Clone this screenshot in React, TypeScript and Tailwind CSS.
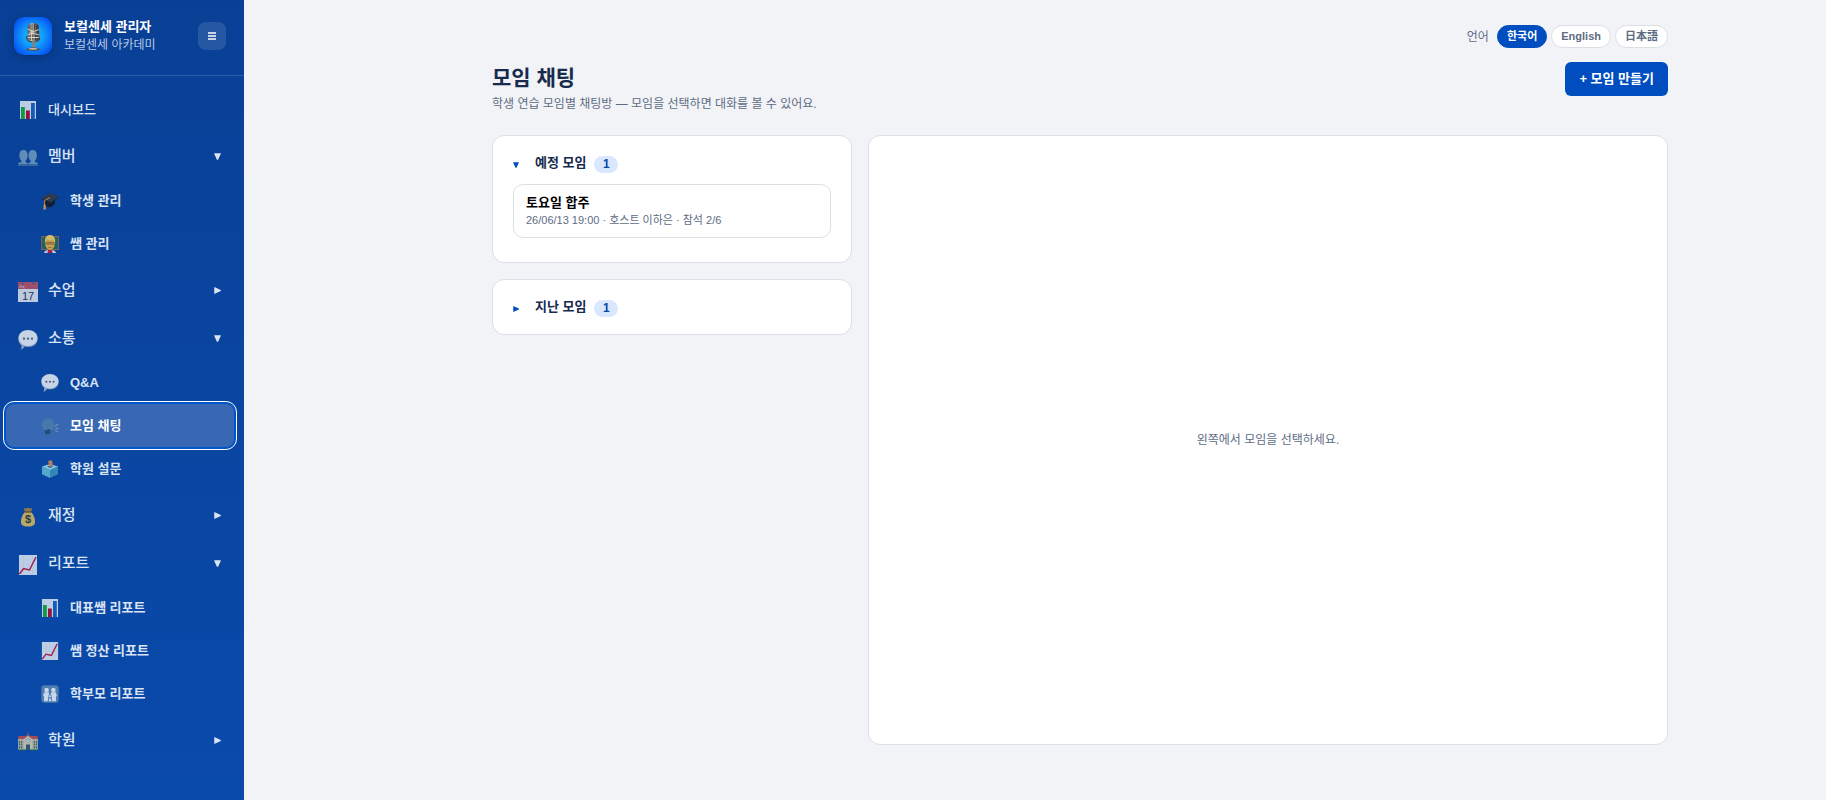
import { useState, type ReactNode } from "react";

function ChartBars() {
  return (
    <svg viewBox="0 0 18 18" className="size-full" aria-hidden="true">
      <rect x="1" y="0" width="16" height="18" fill="#dde5ef" />
      <rect x="2" y="6" width="3.800" height="12" fill="#16a832" />
      <rect x="7" y="9.500" width="3.800" height="8.500" fill="#b0092e" />
      <rect x="12" y="2" width="3.800" height="16" fill="#1262c0" />
    </svg>
  );
}

function ChartLine() {
  return (
    <svg viewBox="0 0 20 20" className="size-full" aria-hidden="true">
      <rect x="1" y="0" width="18" height="20" fill="#dde6f0" />
      <path d="M1 5h18M1 10h18M1 15h18M5.500 0v20M10 0v20M14.500 0v20" stroke="#cddae8" strokeWidth=".5" />
      <path d="M1.500 19 5.500 13.500 11.500 15 18 2" fill="none" stroke="#b8163c" strokeWidth="1.500" />
    </svg>
  );
}

function People() {
  return (
    <svg viewBox="0 0 20 20" className="size-full" aria-hidden="true">
      <g fill="#6f9bbd">
        <path d="M5.500 2c2.500 0 4.200 1.700 4.200 5.200 0 2.500-1 4.600-2.200 5.600v1.200l2 1.100v2.400H0v-1.600c.3-1.300 2.200-1.500 3.500-1.900v-1.200C2.200 11.800 1.300 9.700 1.300 7.200 1.300 3.700 3 2 5.500 2z" />
        <path d="M14.700 2c2.500 0 4.200 1.700 4.200 5.200 0 2.500-.9 4.600-2.200 5.600V14c1.300.4 3 .6 3.300 1.900v1.600h-9.500v-2.400l2.200-1.100v-1.200c-1.200-1-2.200-3.100-2.200-5.600C10.500 3.700 12.200 2 14.700 2z" />
      </g>
      <path d="M0 16h20v1.500H0z" fill="#3f6f9c" />
    </svg>
  );
}

function GradCap() {
  return (
    <svg viewBox="0 0 18 18" className="size-full" aria-hidden="true">
      <path d="M4 8v5c1.200 1.900 3.700 2.500 6 2l4-3V7z" fill="#15191f" />
      <path d="M0 6.200 8.800 1 18 4.500 10 10.500z" fill="#343a42" />
      <path d="M0 6.200 10 10.500 18 4.500v.8l-8 6L0 7z" fill="#20252b" />
      <path d="M9 5.500 3.600 8.500v5" fill="none" stroke="#dc9237" strokeWidth="1" />
      <path d="M2.800 12.500h1.800l.3 5H2.300z" fill="#e9a143" />
    </svg>
  );
}

function Teacher() {
  return (
    <svg viewBox="0 0 18 18" className="size-full" aria-hidden="true">
      <rect y="1" width="18" height="14" fill="#92694a" />
      <rect x="1" y="2" width="16" height="12" fill="#24675c" />
      <path d="M3 18c.3-2.500 3-3 6-3s5.700.5 6 3z" fill="#dce3ea" />
      <path d="M7 15h4l.6 3H6.400z" fill="#c51c36" />
      <ellipse cx="9" cy="8.500" rx="4.800" ry="6.500" fill="#edb33c" />
      <path d="M4 8C3.200 2.500 6 0 9 0s6 2.500 5 8c-1-1-1.200-2.500-2-3.500-2 .8-4.500.5-6-.2C5 5.500 5 7 4 8z" fill="#f6cf60" />
      <path d="M5.300 7.300h2.900v2H5.300zM9.800 7.300h2.900v2H9.800zM8.200 8h1.600" fill="none" stroke="#674a24" strokeWidth=".6" />
      <path d="M7.500 12.200q1.500 1 3 0" fill="none" stroke="#915425" strokeWidth=".8" />
    </svg>
  );
}

function Calendar() {
  return (
    <svg viewBox="0 0 20 20" className="size-full" aria-hidden="true">
      <rect width="20" height="20" fill="#dce2eb" />
      <rect width="20" height="7" fill="#b95263" />
      <path d="M2 6V4h2v2M5.500 4v2h1.500" fill="none" stroke="#dba8b4" strokeWidth=".8" />
      <circle cx="4.500" cy="1.600" r="1" fill="#37558c" />
      <circle cx="15.500" cy="1.600" r="1" fill="#37558c" />
      <text x="10" y="17.800" textAnchor="middle" fontSize="11" fontWeight="400" fontFamily="Liberation Sans, sans-serif" fill="#26354a">17</text>
    </svg>
  );
}

function Bubble() {
  return (
    <svg viewBox="0 0 20 20" className="size-full" aria-hidden="true">
      <path d="M10 0c5.700 0 9.700 3.500 9.700 8.500S15.700 17 10 17c-1.200 0-2.200-.1-3.200-.4-1 1.500-2.500 2.700-4.300 3.100.8-1.200 1.200-2.800.9-4.300C1.500 13.800.3 11.300.3 8.500.3 3.500 4.300 0 10 0z" fill="#9fb0c5" />
      <path d="M10 .3c5.300 0 9.300 3.300 9.300 7.800s-4 7.900-9.300 7.900S.7 12.500.7 8.100 4.700.3 10 .3z" fill="#e8eef5" />
      <circle cx="6" cy="8.700" r="1.100" fill="#4c5a70" />
      <circle cx="10" cy="8.700" r="1.100" fill="#4c5a70" />
      <circle cx="14" cy="8.700" r="1.100" fill="#4c5a70" />
    </svg>
  );
}

function Speaking() {
  return (
    <svg viewBox="0 0 18 18" className="size-full" aria-hidden="true">
      <path d="M7 1.500c4 0 6 2.400 6.200 5.300l.8 2-1 .8-.3 3.400-3.200.3-.3 4H4v-4C1.800 12.200.8 10 .8 7.300.8 4 3.300 1.500 7 1.500z" fill="#4a7ea8" />
      <path d="M4 13.300 8.800 12l.7 1.300-.3 4H4z" fill="#24466f" />
      <path d="M14 9.400 17.300 7M14.500 11.300h3.200M14 13l2.800 2" stroke="#6d98bd" strokeWidth="1.300" />
    </svg>
  );
}

function Ballot() {
  return (
    <svg viewBox="0 0 18 18" className="size-full" aria-hidden="true">
      <path d="M1 6.500 9 4l8 2.500-8 3.800z" fill="#9bdcec" />
      <path d="M1 6.500 9 10.300V18l-8-3.800z" fill="#65b9d3" />
      <path d="M17 6.500 9 10.300V18l8-3.800z" fill="#3a94b8" />
      <path d="M6 6.700 9 5.500l3.500 1.200L9 8z" fill="#2b6788" />
      <path d="m7 1 4-.7 1 5.700-3.500 1z" fill="#d48a50" />
    </svg>
  );
}

function MoneyBag() {
  return (
    <svg viewBox="0 0 20 20" className="size-full" aria-hidden="true">
      <path d="m5.500 1 2.500.6L10 .7l2 .9 2.500-.6-1.700 4H7.200z" fill="#a38440" />
      <path d="M7 4.700h6c2.500 2.700 4 6 4 9.800 0 3.500-1.500 5-7 5s-7-1.500-7-5c0-3.800 1.500-7.100 4-9.800z" fill="#dab95c" />
      <path d="M6.500 4.200h7v1.500h-7z" fill="#7d4d2a" />
      <text x="10" y="16.300" textAnchor="middle" fontSize="11" fontWeight="700" fontFamily="Liberation Sans, sans-serif" fill="#2c3b3b">$</text>
    </svg>
  );
}

function Family() {
  return (
    <svg viewBox="0 0 18 18" className="size-full" aria-hidden="true">
      <rect x=".3" y=".3" width="17.400" height="17.400" rx="3" fill="#5986b1" />
      <g fill="#e9f1fa">
        <circle cx="5.600" cy="5" r="2.300" />
        <circle cx="12.400" cy="5" r="2.300" />
        <path d="M3.200 7.300h4.500l1 4.200-1.500.5-.4 4.200H3l.1-4.600-1-.6zM10.300 7.300h4.500l1.100 3.700-1 .6.1 4.600h-3.800l-.4-4.200-1.500-.5z" />
      </g>
      <g fill="#e9f1fa" stroke="#5986b1" strokeWidth=".7">
        <circle cx="9" cy="11.200" r="1.500" />
        <path d="M8 12.900h2l.8 3.500H7.200z" />
      </g>
    </svg>
  );
}

function School() {
  return (
    <svg viewBox="0 0 20 20" className="size-full" aria-hidden="true">
      <path d="M0 6h20v12H0z" fill="#bfb79a" />
      <path d="M.5 4h7v3H0zM12.500 4h7l.5 3h-7.500z" fill="#bd4f4a" />
      <path d="M5.500 6.500 10 2.500l4.500 4V18h-9z" fill="#d5cca9" />
      <path d="m5 6.500 5-4.200 5 4.200-.5.800L10 3.700 5.500 7.300z" fill="#b7474a" />
      <path d="M1.500 9v8M3.700 9v8M16.300 9v8M18.500 9v8" stroke="#35627c" strokeWidth="1.200" strokeDasharray="1.700 .9" />
      <circle cx="10" cy="8.700" r="2" fill="#f5f5ef" stroke="#697f8d" strokeWidth=".6" />
      <path d="M10 7.600v1.200h.9" fill="none" stroke="#34495c" strokeWidth=".5" />
      <path d="M8 12.500h4V18H8z" fill="#34586c" />
      <path d="M0 17.300h8v.9H0zM12 17.300h8v.9h-8z" fill="#468055" />
      <path d="M10 0v3" stroke="#888" strokeWidth=".6" />
    </svg>
  );
}

function MicLogo() {
  return (
    <svg viewBox="0 0 38 38" className="size-[38px] shrink-0 rounded-[10px] shadow-[0_2px_8px_rgba(0,0,0,0.25)]" aria-hidden="true">
      <defs>
        <radialGradient id="logo-glow">
          <stop offset="0" stopColor="#1ed2ff" />
          <stop offset=".5" stopColor="#109bfa" />
          <stop offset="1" stopColor="#0759f5" />
        </radialGradient>
        <linearGradient id="logo-metal">
          <stop offset="0" stopColor="#4a4743" />
          <stop offset=".35" stopColor="#d1cdc7" />
          <stop offset=".65" stopColor="#69645f" />
          <stop offset="1" stopColor="#25262b" />
        </linearGradient>
      </defs>
      <rect width="38" height="38" fill="#0759f5" />
      <circle cx="19" cy="19" r="21" fill="url(#logo-glow)" />
      <path d="M12.500 19c0 4 2 6 6 6s7-1 7.300-4" fill="none" stroke="#4b4b4e" strokeWidth="1.300" />
      <path d="M18 23h3v8h-3z" fill="#83827f" />
      <path d="M12.500 33c.3-1.600 3-2.500 6.700-2.500s6.300.9 6.600 2.500c-2 1-11 1-13.300 0z" fill="#4a4544" />
      <ellipse cx="19" cy="31.800" rx="4.500" ry=".9" fill="#c9bdb1" />
      <path d="M13.500 10.500c.2-3 2.500-4.500 5.800-4.500 3.500 0 5.300 1.700 5.500 4.500l.6 10c0 2.500-1.900 3.700-5.400 3.700-4 0-6-1.200-6.200-3.700z" fill="url(#logo-metal)" />
      <path d="M16 7.500v7M18 6.500v7M20.500 6.500v7M22.800 7.500v6M16.300 17v6M18.700 17.500v6M21.500 17v6" stroke="#35343a" strokeWidth=".8" />
      <path d="m13.500 12 6 2.500 5.500-2M14 17.500l5.500-1.200 5.700 1.700M14 20.500h11" fill="none" stroke="#e0d9cc" strokeWidth=".9" />
    </svg>
  );
}

function Caret({ open, className }: { open: boolean; className: string }) {
  return (
    <svg viewBox="0 0 8 8" className={className} fill="currentColor" aria-hidden="true">
      {open ? <path d="M0 .300h8L4.700 7.800H3.300z" /> : <path d="M.3 0v8l7.500-3.300V3.300z" />}
    </svg>
  );
}

type Item = { label: string; icon: ReactNode };
type Group = Item & { items: Item[]; startsOpen?: boolean };

const groups: Group[] = [
  {
    label: "멤버",
    icon: <People />,
    startsOpen: true,
    items: [
      { label: "학생 관리", icon: <GradCap /> },
      { label: "쌤 관리", icon: <Teacher /> },
    ],
  },
  { label: "수업", icon: <Calendar />, items: [] },
  {
    label: "소통",
    icon: <Bubble />,
    startsOpen: true,
    items: [
      { label: "Q&A", icon: <Bubble /> },
      { label: "모임 채팅", icon: <Speaking /> },
      { label: "학원 설문", icon: <Ballot /> },
    ],
  },
  { label: "재정", icon: <MoneyBag />, items: [] },
  {
    label: "리포트",
    icon: <ChartLine />,
    startsOpen: true,
    items: [
      { label: "대표쌤 리포트", icon: <ChartBars /> },
      { label: "쌤 정산 리포트", icon: <ChartLine /> },
      { label: "학부모 리포트", icon: <Family /> },
    ],
  },
  { label: "학원", icon: <School />, items: [] },
];

function NavGroup({ group }: { group: Group }) {
  const [open, setOpen] = useState(!!group.startsOpen);
  return (
    <div>
      <button
        type="button"
        aria-expanded={open}
        onClick={() => setOpen(!open)}
        className="flex h-12 w-full items-center gap-2.5 pt-0.5 pr-[13px] pl-3 text-left text-[15px] font-medium"
      >
        <span className="mt-1 size-5 opacity-85">{group.icon}</span>
        <span className="flex-1">{group.label}</span>
        <Caret open={open} className="size-[7px]" />
      </button>
      {open &&
        group.items.map((item) => {
          const active = item.label === "모임 채팅";
          return (
            <a
              key={item.label}
              href="#"
              aria-current={active ? "page" : undefined}
              className={
                active
                  ? "flex h-[43px] items-center gap-[11px] rounded-lg bg-[#3868b4] pl-[35px] text-[13px] font-bold text-white ring-2 ring-[#0055cc] outline-1 outline-offset-2 outline-white"
                  : "flex h-[43px] items-center gap-[11px] rounded-lg pl-[35px] text-[13px] font-semibold"
              }
            >
              <span className="size-[18px] opacity-85">{item.icon}</span>
              {item.label}
            </a>
          );
        })}
    </div>
  );
}

function Sidebar() {
  return (
    <aside className="w-[244px] shrink-0 bg-linear-to-b from-[#094096] to-[#0a4aab] text-[#dbe4f3]">
      <header className="flex h-[76px] items-center gap-3 border-b border-white/15 pr-[18px] pb-1 pl-3.5">
        <MicLogo />
        <div className="flex-1">
          <div className="text-[13px] leading-[19px] font-bold text-white">보컬센세 관리자</div>
          <div className="text-xs leading-[18px] text-[#b9cae6]">보컬센세 아카데미</div>
        </div>
        <button type="button" aria-label="메뉴 접기" className="flex size-7 items-center justify-center rounded-lg bg-white/12 text-white">
          <svg viewBox="0 0 8 8" className="size-2" aria-hidden="true">
            <path d="M0 1h8M0 4h8M0 7h8" stroke="currentColor" strokeWidth="1.300" />
          </svg>
        </button>
      </header>
      <nav className="pt-[11px] pr-2.5 pl-1.5">
        <a href="#" className="flex h-11 items-center gap-2.5 pt-0.5 pl-3 text-[13px] font-medium">
          <span className="flex w-5 justify-center">
            <span className="size-[18px] opacity-85">
              <ChartBars />
            </span>
          </span>
          대시보드
        </a>
        {groups.map((group) => (
          <NavGroup key={group.label} group={group} />
        ))}
      </nav>
    </aside>
  );
}

function Section({ title, count, startsOpen, children }: { title: string; count: number; startsOpen?: boolean; children?: ReactNode }) {
  const [open, setOpen] = useState(!!startsOpen);
  return (
    <section className="rounded-xl border border-[#dcdfe6] bg-white px-5 py-4">
      <button type="button" aria-expanded={open} onClick={() => setOpen(!open)} className="flex h-[22px] w-full items-center gap-2 text-[13px] font-bold text-[#172b4d]">
        <span className="flex w-3.5 pt-1 text-[#004dc0]">
          <Caret open={open} className="size-[6px]" />
        </span>
        {title}
        <span className="mt-0.5 flex h-[17px] w-6 items-center justify-center rounded-full bg-[#d9e7ff] text-xs text-[#0747a6]">{count}</span>
      </button>
      {open && children}
    </section>
  );
}

const languages = ["한국어", "English", "日本語"];

export default function App() {
  const [language, setLanguage] = useState("한국어");
  return (
    <div className="flex min-h-screen bg-[#f1f3f7] font-['Liberation_Sans','Noto_Sans_CJK_KR',sans-serif] text-[#172b4d]">
      <Sidebar />
      <main className="min-w-0 flex-1 pt-[25px] pb-14 pl-[90px]">
        <div className="mx-auto max-w-[1240px] px-8">
          <div className="flex items-center justify-end gap-1">
            <span className="mr-1 text-xs text-[#5e6c84]">언어</span>
            {languages.map((name) => (
              <button
                key={name}
                type="button"
                aria-pressed={name === language}
                onClick={() => setLanguage(name)}
                className={
                  name === language
                    ? "flex h-[23px] items-center rounded-full border border-[#004dc0] bg-[#004dc0] px-[9px] text-[11px] font-bold text-white"
                    : "flex h-[23px] items-center rounded-full border border-[#dcdfe6] bg-white px-[9px] text-[11px] font-bold text-[#5e6c84]"
                }
              >
                {name}
              </button>
            ))}
          </div>
          <div className="mt-3.5 flex items-start justify-between">
            <div>
              <h1 className="text-[21px] leading-8 font-bold">모임 채팅</h1>
              <p className="text-xs leading-5 text-[#5e6c84]">학생 연습 모임별 채팅방 — 모임을 선택하면 대화를 볼 수 있어요.</p>
            </div>
            <button type="button" className="flex h-[34px] items-center rounded-md bg-[#004dc0] px-3.5 text-[13px] font-bold text-white">
              + 모임 만들기
            </button>
          </div>
          <div className="mt-[21px] grid grid-cols-[360px_1fr] gap-4">
            <div className="flex flex-col gap-4">
              <Section title="예정 모임" count={1} startsOpen>
                <button type="button" className="mt-2.5 mb-2 block w-full rounded-[10px] border border-[#dcdfe6] px-3 py-2 text-left">
                  <span className="block text-[13px] leading-[19px] font-bold text-black">토요일 합주</span>
                  <span className="block text-[11px] leading-[17px] text-[#5e6c84]">26/06/13 19:00 · 호스트 이하은 · 참석 2/6</span>
                </button>
              </Section>
              <Section title="지난 모임" count={1} />
            </div>
            <section className="flex min-h-[610px] items-center justify-center rounded-xl border border-[#dcdfe6] bg-white text-xs text-[#5e6c84]">
              왼쪽에서 모임을 선택하세요.
            </section>
          </div>
        </div>
      </main>
    </div>
  );
}
